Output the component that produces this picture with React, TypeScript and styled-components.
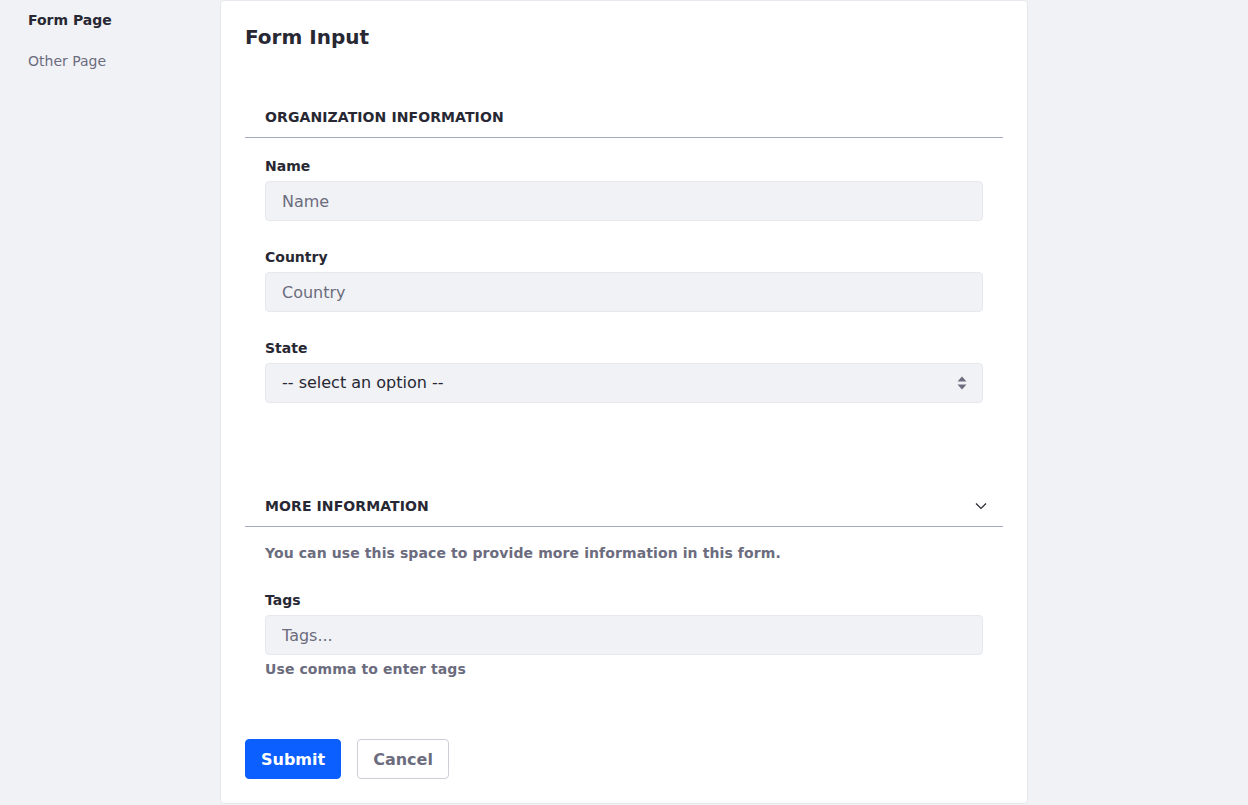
import React from "react";
import styled, { createGlobalStyle } from "styled-components";

const Global = createGlobalStyle`
  * { box-sizing: border-box; }
  html, body { margin: 0; padding: 0; background: #f1f2f5; }
  body { font-family: "DejaVu Sans", "Noto Sans", sans-serif; color: #272833; }
`;

const Layout = styled.div`
  display: flex;
  align-items: flex-start;
  min-height: 805px;
`;

const Sidebar = styled.nav`
  width: 220px;
  flex: none;
  padding: 0 0 0 18px;
  display: flex;
  flex-direction: column;
`;

const NavLink = styled.a<{ $active?: boolean }>`
  display: block;
  padding: 10px;
  font-size: 14px;
  line-height: 21px;
  font-weight: ${(p) => (p.$active ? 700 : 400)};
  color: ${(p) => (p.$active ? "#272833" : "#6b6c7e")};
  text-decoration: none;
`;

const Card = styled.main`
  width: 808px;
  flex: none;
  background: #fff;
  border: 1px solid #e7e7ed;
  border-radius: 4px;
  padding: 24px 24px 24px;
  display: flex;
  flex-direction: column;
`;

const Title = styled.h1`
  margin: 0;
  font-size: 20px;
  line-height: 24px;
  font-weight: 700;
  color: #272833;
`;

const SectionHeader = styled.div<{ $top: number }>`
  margin-top: ${(p) => p.$top}px;
  padding: 0 20px 10px;
  border-bottom: 1px solid #a7a9bc;
  display: flex;
  align-items: center;
  justify-content: space-between;
`;

const SectionTitle = styled.h2`
  margin: 0;
  font-size: 14px;
  line-height: 20px;
  font-weight: 700;
  letter-spacing: 0.1px;
  text-transform: uppercase;
  color: #272833;
`;

const Chevron = styled.svg`
  margin-right: -4px;
`;

const SectionBody = styled.div<{ $top: number }>`
  padding: 0 20px;
  margin-top: ${(p) => p.$top}px;
  display: flex;
  flex-direction: column;
`;

const Field = styled.div<{ $top?: number }>`
  display: flex;
  flex-direction: column;
  margin-top: ${(p) => p.$top ?? 0}px;
`;

const Label = styled.label`
  font-size: 14px;
  line-height: 20px;
  font-weight: 700;
  color: #272833;
  margin-bottom: 5px;
`;

const Input = styled.input`
  height: 40px;
  width: 100%;
  background: #f1f2f5;
  border: 1px solid #e7e7ed;
  border-radius: 4px;
  padding: 0 16px;
  font-family: inherit;
  font-size: 16px;
  color: #272833;
  outline: none;
  &::placeholder { color: #6b6c7e; opacity: 1; }
`;

const SelectWrap = styled.div`
  position: relative;
  height: 40px;
`;

const Select = styled.select`
  appearance: none;
  -webkit-appearance: none;
  height: 40px;
  width: 100%;
  background: #f1f2f5;
  border: 1px solid #e7e7ed;
  border-radius: 4px;
  padding: 0 40px 2px 16px;
  font-family: inherit;
  font-size: 16px;
  color: #272833;
  outline: none;
`;

const SelectArrows = styled.svg`
  position: absolute;
  right: 16px;
  top: 13px;
  pointer-events: none;
`;

const Help = styled.p<{ $top: number }>`
  margin: ${(p) => p.$top}px 0 0;
  font-size: 14px;
  line-height: 20px;
  font-weight: 700;
  letter-spacing: 0.1px;
  color: #6b6c7e;
`;

const Actions = styled.div`
  margin-top: 60px;
  display: flex;
  gap: 16px;
`;

const Button = styled.button<{ $primary?: boolean }>`
  height: 40px;
  padding: 0 15px;
  border-radius: 4px;
  font-family: inherit;
  font-size: 16px;
  font-weight: 700;
  border: 1px solid ${(p) => (p.$primary ? "#0b5fff" : "#cdced9")};
  background: ${(p) => (p.$primary ? "#0b5fff" : "#fff")};
  color: ${(p) => (p.$primary ? "#fff" : "#6b6c7e")};
  cursor: pointer;
`;

export default function App() {
  return (
    <>
      <Global />
      <Layout>
        <Sidebar>
          <NavLink $active href="#">Form Page</NavLink>
          <NavLink href="#">Other Page</NavLink>
        </Sidebar>
        <Card>
          <Title>Form Input</Title>

          <SectionHeader $top={58}>
            <SectionTitle>Organization Information</SectionTitle>
          </SectionHeader>
          <SectionBody $top={18}>
            <Field>
              <Label>Name</Label>
              <Input placeholder="Name" />
            </Field>
            <Field $top={26}>
              <Label>Country</Label>
              <Input placeholder="Country" />
            </Field>
            <Field $top={26}>
              <Label>State</Label>
              <SelectWrap>
                <Select defaultValue="">
                  <option value="">-- select an option --</option>
                </Select>
                <SelectArrows width="10" height="14" viewBox="0 0 10 14">
                  <path d="M5 0.5 L9.5 5.5 H0.5 Z" fill="#6b6c7e" />
                  <path d="M5 13.5 L9.5 8.5 H0.5 Z" fill="#6b6c7e" />
                </SelectArrows>
              </SelectWrap>
            </Field>
          </SectionBody>

          <SectionHeader $top={93}>
            <SectionTitle>More Information</SectionTitle>
            <Chevron width="12" height="8" viewBox="0 0 12 8">
              <path d="M1 1.5 L6 6.5 L11 1.5" fill="none" stroke="#272833" strokeWidth="1.2" />
            </Chevron>
          </SectionHeader>
          <SectionBody $top={16}>
            <Help $top={0}>You can use this space to provide more information in this form.</Help>
            <Field $top={27}>
              <Label>Tags</Label>
              <Input placeholder="Tags..." />
            </Field>
            <Help $top={4}>Use comma to enter tags</Help>
          </SectionBody>

          <Actions>
            <Button $primary>Submit</Button>
            <Button>Cancel</Button>
          </Actions>
        </Card>
      </Layout>
    </>
  );
}
